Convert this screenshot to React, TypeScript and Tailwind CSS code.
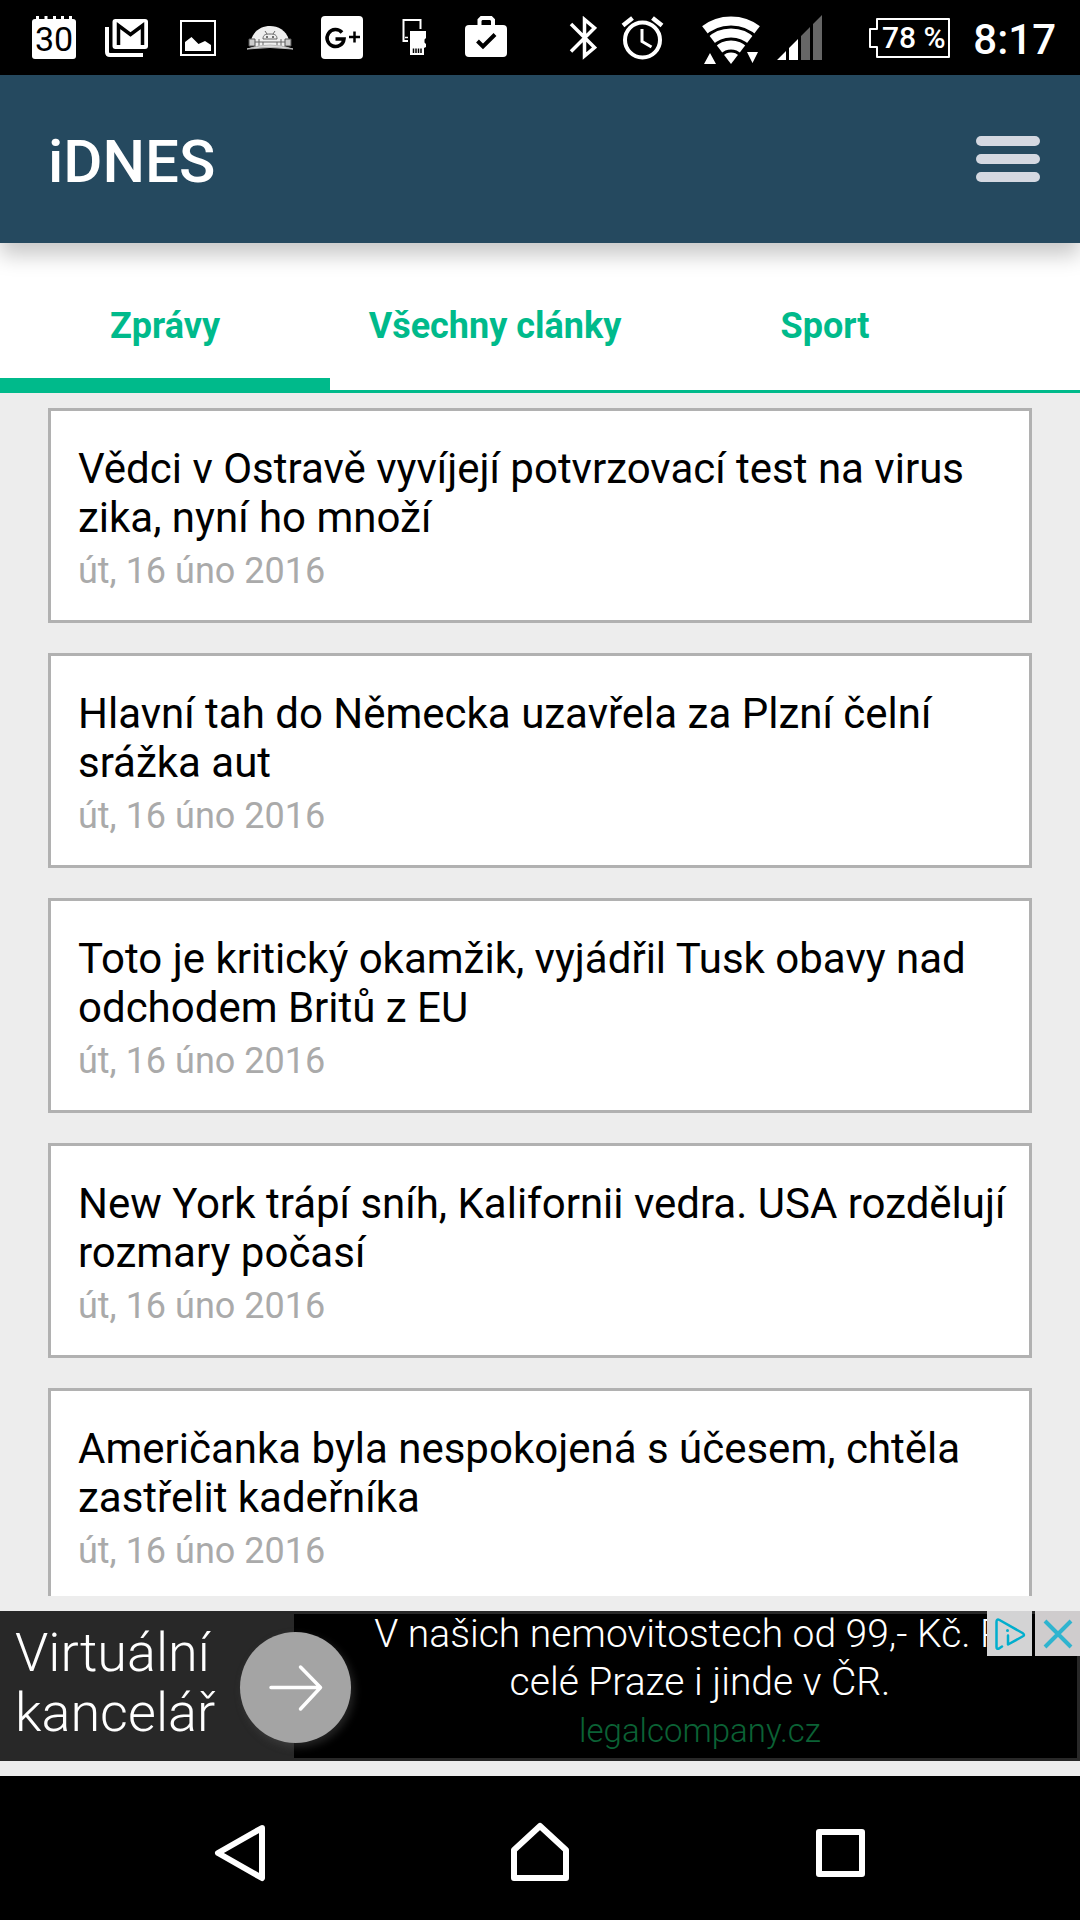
import React, { useState } from 'react';
import clsx from 'clsx';

type Article = {
  id: number;
  title: string;
  date: string;
};

const TABS = ['Zprávy', 'Všechny clánky', 'Sport'];

const ARTICLES: Article[] = [
  { id: 1, title: 'Vědci v Ostravě vyvíjejí potvrzovací test na virus zika, nyní ho množí', date: 'út, 16 úno 2016' },
  { id: 2, title: 'Hlavní tah do Německa uzavřela za Plzní čelní srážka aut', date: 'út, 16 úno 2016' },
  { id: 3, title: 'Toto je kritický okamžik, vyjádřil Tusk obavy nad odchodem Britů z EU', date: 'út, 16 úno 2016' },
  { id: 4, title: 'New York trápí sníh, Kalifornii vedra. USA rozdělují rozmary počasí', date: 'út, 16 úno 2016' },
  { id: 5, title: 'Američanka byla nespokojená s účesem, chtěla zastřelit kadeřníka', date: 'út, 16 úno 2016' },
];

// Every notification icon sits in the same 72x75 slot
function Slot({ children }: { children: React.ReactNode }) {
  return (
    <svg viewBox="0 0 72 75" className="w-[72px] h-[75px] shrink-0" fill="none" aria-hidden="true">
      {children}
    </svg>
  );
}

function NotificationIcons() {
  return (
    <div className="flex">
      {/* Calendar */}
      <Slot>
        <rect x="14" y="19" width="44" height="40" rx="3" fill="#fff" />
        <path d="M19.500 16v4M28 16v4M36.500 16v4M44.500 16v4M52.500 16v4" stroke="#fff" strokeWidth="3" />
        <text x="36" y="51" textAnchor="middle" fontSize="34" fill="#000" className="font-[Roboto]">30</text>
      </Slot>
      {/* Gmail */}
      <Slot>
        <path d="M17 27V52Q17 55 20 55H53" stroke="#fff" strokeWidth="4" />
        <rect x="22.500" y="19" width="35.500" height="30" rx="3" fill="#fff" />
        <path d="M28.500 45V25.500L40.500 34.500L52.500 25.500V45" stroke="#000" strokeWidth="3.500" />
      </Slot>
      {/* Picture */}
      <Slot>
        <rect x="19" y="21" width="34" height="34" stroke="#fff" strokeWidth="2" />
        <path d="M23 51V42L29.500 37L36.500 44L43 41L49 45V51Z" fill="#fff" />
      </Slot>
      {/* Droid dome */}
      <Slot>
        <path d="M17 40C20 30 28 26 36 26S52 30 55 40V46H17Z" fill="#eee" />
        <path d="M15 39h6v7h-6zM51 39h6v7h-6z" fill="#ccc" stroke="#555" />
        <path d="M29 39C29 35 31 34 36 34S43 35 43 39ZM31 31l2 3M41 31l-2 3M21 42h30M25 39v7M47 39v7M29 42v4M43 42v4" stroke="#666" strokeWidth="1" />
        <path d="M13 49Q36 41 59 49Q36 46 13 49Z" fill="#ddd" stroke="#bbb" />
        <circle cx="33" cy="37" r="1" fill="#444" />
        <circle cx="39" cy="37" r="1" fill="#444" />
      </Slot>
      {/* Google+ */}
      <Slot>
        <rect x="15" y="16" width="42" height="43" rx="4" fill="#fff" />
        <path d="M36 32.500A8.500 8.500 0 1 0 38 39H29.500" stroke="#000" strokeWidth="3.500" />
        <path d="M43 37H54M48.500 31.500V42.500" stroke="#000" strokeWidth="2.500" />
      </Slot>
      {/* Phone with memory card */}
      <Slot>
        <path d="M30 41H25.500V20H42.500V29" stroke="#fff" strokeWidth="2" />
        <path d="M27 37.500h3" stroke="#fff" strokeWidth="1.500" />
        <path d="M32 31H48V38L46.500 39.500V42.500L48 44V47L46 48V55H32Z" fill="#fff" />
        <path d="M35.500 48.500v4.500M38 48.500v4.500M40.500 48.500v4.500M43 48.500v4.500" stroke="#000" strokeWidth="1.500" />
      </Slot>
      {/* Work bag */}
      <Slot>
        <rect x="15" y="25" width="42" height="32" rx="4" fill="#fff" />
        <path d="M29.500 26V20L31.500 18H41L43 20V26" stroke="#fff" strokeWidth="4" />
        <path d="M27.500 41L33 46.500L45 34.500" stroke="#000" strokeWidth="4" />
      </Slot>
    </div>
  );
}

function SystemIcons() {
  return (
    <div className="flex items-center">
      <svg viewBox="0 0 28 44" className="w-7 h-11 mr-6" fill="none" aria-label="Bluetooth">
        <path d="M2 8L25.500 31.500L15.500 40V3.500L25.500 12L2 35.500" stroke="#fff" strokeWidth="3.500" />
      </svg>
      <svg viewBox="0 0 43 44" className="w-[43px] h-11 mr-[38px]" fill="none" aria-label="Alarm">
        <circle cx="21.500" cy="24" r="17.500" stroke="#fff" strokeWidth="4" />
        <path d="M21 13V25.500L30.500 31" stroke="#fff" strokeWidth="3" />
        <path d="M2 9.500L11.500 2M41 9.500L31.500 2" stroke="#fff" strokeWidth="4.500" />
      </svg>
      <svg viewBox="0 0 58 50" className="w-[58px] h-[50px] mr-[17px] mt-[5px]" fill="none" aria-label="Wi-Fi">
        <clipPath id="fan">
          <path d="M29 49L-11 -3.400H69Z" />
        </clipPath>
        <g clipPath="url(#fan)" stroke="#fff" strokeWidth="9">
          <circle cx="29" cy="49" r="43" />
          <circle cx="29" cy="49" r="31" />
          <circle cx="29" cy="49" r="19" />
          <circle cx="29" cy="49" r="11.500" fill="#fff" stroke="none" />
        </g>
        <path d="M2 49L8 38L14 49ZM45 37H56L50.500 48Z" fill="#fff" />
      </svg>
      <svg viewBox="0 0 45 45" className="w-[45px] h-[45px] mr-[47px]" aria-label="Signal">
        <path d="M0 45L9 36V45ZM12 45V33L21 24V45Z" fill="#fff" />
        <path d="M24 45V21L33 12V45ZM36 45V9L45 0V45Z" fill="#666" />
      </svg>
      <div className="relative flex items-center justify-center w-[81px] h-10 pl-2 mr-[23px]">
        <svg viewBox="0 0 81 40" className="absolute inset-0" fill="none" aria-hidden="true">
          <path d="M8 1H80V39H8V29H1V11H8Z" stroke="#fff" strokeWidth="2" strokeLinejoin="round" />
        </svg>
        <span className="text-[30px] leading-none font-medium whitespace-nowrap">78 %</span>
      </div>
      <span className="pt-1 text-[42px] leading-none font-medium">8:17</span>
    </div>
  );
}

function StatusBar() {
  return (
    <div className="flex items-center justify-between h-[75px] shrink-0 pl-[18px] pr-6 bg-black text-white">
      <NotificationIcons />
      <SystemIcons />
    </div>
  );
}

function ArticleCard({ article }: { article: Article }) {
  return (
    <a href="#" className="block bg-white border-3 border-[#b1b1b1] pl-[27px] pr-5 pt-[33px] pb-7">
      <h2 className="text-[42px] leading-[49px] text-black">{article.title}</h2>
      <p className="mt-2 text-[36px] leading-[42px] text-[#aaaaaa]">{article.date}</p>
    </a>
  );
}

function AdBanner() {
  return (
    <aside className="relative flex h-[150px] shrink-0 my-[15px] bg-[#282828] text-white font-light overflow-hidden">
      <a href="#" className="flex items-center w-[294px] shrink-0 pl-[15px] pb-[6px] text-[54px] leading-[60px]">
        Virtuální<br />kancelář
      </a>
      <a href="#" className="flex-1 min-w-0 flex flex-col gap-2 my-[3px] mr-[3px] pl-[72px] pr-[43px] bg-black text-center text-[39px] leading-10 overflow-hidden">
        <span className="flex justify-center whitespace-nowrap">V našich nemovitostech od 99,- Kč. Po</span>
        <span>celé Praze i jinde v ČR.</span>
        <span className="text-[33px] leading-[42px] text-[#0b6235]">legalcompany.cz</span>
      </a>

      {/* Arrow straddles both halves of the banner */}
      <span className="absolute left-[240px] top-[21px] w-[111px] h-[111px] rounded-full bg-[#a4a4a4] shadow-[3px_4px_8px_rgba(90,90,90,0.4)]">
        <svg viewBox="0 0 111 111" fill="none" aria-hidden="true">
          <path d="M31 55.500H80M60.500 35L80.500 55.500L60.500 77" stroke="#fff" strokeWidth="3.500" strokeLinecap="round" strokeLinejoin="round" />
        </svg>
      </span>

      <div className="absolute top-0 right-0 flex gap-[3px]">
        <button aria-label="AdChoices" className="w-[45px] h-[45px] bg-[#d3d3d4]">
          <svg viewBox="0 0 45 45" fill="none" stroke="#00aecd" strokeWidth="2.500" strokeLinecap="round" strokeLinejoin="round">
            <path d="M15 35.500L12 37.500Q9.500 38.500 9.500 36V11Q9.500 7.500 12.500 9L35.500 22Q38.500 24 35.500 25.500L21 33.500V24.500" />
            <path d="M20.500 19.500v.1" strokeWidth="3" />
          </svg>
        </button>
        <button aria-label="Zavřít reklamu" className="w-[45px] h-[45px] bg-[#cfcccd]">
          <svg viewBox="0 0 45 45" fill="none" stroke="#2fb4cf" strokeWidth="4">
            <path d="M10 10L36 36M36 10L10 36" />
          </svg>
        </button>
      </div>
    </aside>
  );
}

function SystemNav() {
  return (
    <div className="flex h-36 shrink-0 px-[90px] pt-2 bg-black">
      <button aria-label="Zpět" className="flex-1 flex items-center justify-center">
        <svg viewBox="0 0 60 60" className="w-[60px] h-[60px]" fill="none" stroke="#fff" strokeWidth="6" strokeLinejoin="round">
          <path d="M52 6L8 31L52 56Z" />
        </svg>
      </button>
      <button aria-label="Domů" className="flex-1 flex items-center justify-center">
        <svg viewBox="0 0 60 60" className="w-[60px] h-[60px]" fill="none" stroke="#fff" strokeWidth="6" strokeLinejoin="round">
          <path d="M4 56V28L30 4L56 28V56Z" />
        </svg>
      </button>
      <button aria-label="Poslední aplikace" className="flex-1 flex items-center justify-center">
        <svg viewBox="0 0 60 60" className="w-[60px] h-[60px]" fill="none" stroke="#fff" strokeWidth="6" strokeLinejoin="round">
          <rect x="9" y="10" width="43" height="42" />
        </svg>
      </button>
    </div>
  );
}

export default function App() {
  const [activeTab, setActiveTab] = useState(TABS[0]);

  return (
    <div className="flex flex-col h-screen bg-[#ededed] font-[Roboto,sans-serif]">
      <StatusBar />

      {/* App bar */}
      <header className="relative z-10 flex items-center justify-between h-[168px] shrink-0 pl-12 pr-10 bg-[#25495f] shadow-[0_12px_20px_rgba(0,0,0,0.22)]">
        <h1 className="pt-[6px] text-[60px] leading-[70px] font-medium text-white">iDNES</h1>
        <button aria-label="Menu" className="flex flex-col gap-2">
          <span className="w-16 h-[10px] rounded-full bg-[#d4d8e1]" />
          <span className="w-16 h-[10px] rounded-full bg-[#d4d8e1]" />
          <span className="w-16 h-[10px] rounded-full bg-[#d4d8e1]" />
        </button>
      </header>

      {/* Category tabs */}
      <nav className="flex h-[150px] shrink-0 bg-white border-b-3 border-[#00ba8b] overflow-hidden">
        {TABS.map(tab => (
          <button
            key={tab}
            onClick={() => setActiveTab(tab)}
            className={clsx(
              'w-[330px] shrink-0 pt-[30px] border-b-12 text-[36px] leading-[42px] font-bold text-[#00ba8b]',
              tab === activeTab ? 'border-[#00ba8b]' : 'border-transparent'
            )}
          >
            {tab}
          </button>
        ))}
      </nav>

      {/* Article list */}
      <main className="flex-1 min-h-0 overflow-y-auto [scrollbar-width:none] px-12 pt-[15px] space-y-[30px]">
        {ARTICLES.map(article => (
          <ArticleCard key={article.id} article={article} />
        ))}
      </main>

      <AdBanner />
      <SystemNav />
    </div>
  );
}
